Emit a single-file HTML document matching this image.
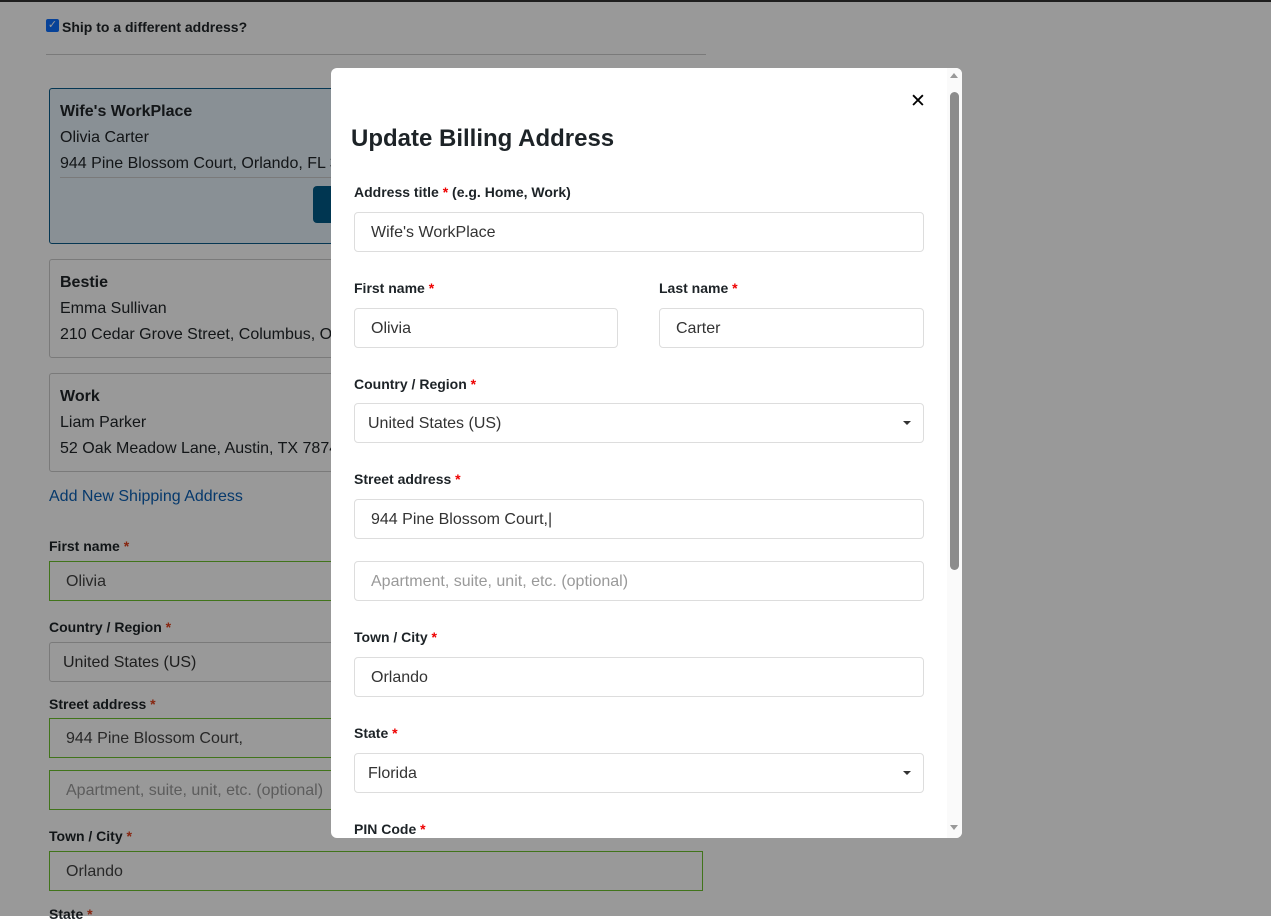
<!DOCTYPE html>
<html><head><meta charset="utf-8"><style>
*{box-sizing:border-box;margin:0;padding:0}
body{width:1271px;height:916px;overflow:hidden;background:#fff;font-family:"Liberation Sans",sans-serif;color:#212529;position:relative}
.a{position:absolute}
.lbl{font-size:14px;font-weight:bold;color:#1d2327}
.lbl b{color:#e2401c}
.inp{position:absolute;height:40px;border:1px solid #ccc;border-radius:0;font-size:16px;line-height:40px;padding-left:16px;color:#444;background:#fff}
.g{border-color:#6dc22e}
.card{position:absolute;left:49px;width:654px;border:1px solid #ccc;border-radius:3px;padding:10px 10px;font-size:16px;line-height:26px}
.ov{position:absolute;inset:0;background:rgba(0,0,0,.4)}
.m{position:absolute;left:331px;top:68px;width:631px;height:770px;background:#fff;border-radius:6px;overflow:hidden}
.ml{position:absolute;font-size:14px;font-weight:bold;color:#1d2327}
.ml b{color:#e00}
.mi{position:absolute;left:23px;width:570px;height:40px;border:1px solid #ddd;border-radius:4px;font-size:16px;line-height:40px;padding-left:16px;color:#333}
.car{position:absolute;right:12px;top:17px;border-left:4px solid transparent;border-right:4px solid transparent;border-top:4px solid #333}
</style></head><body>
<div class="a" style="left:0;top:0;width:1271px;height:2px;background:#333"></div>
<div class="a" style="left:46px;top:19px;width:13px;height:13px;background:#0d6efd;border-radius:2px;color:#fff;font-size:11px;line-height:13px;text-align:center">✓</div>
<div class="a" style="left:62px;top:19px;font-size:14px;font-weight:bold">Ship to a different address?</div>
<div class="a" style="left:46px;top:54px;width:660px;height:1px;background:#ccc"></div>
<div class="card" style="top:88px;height:156px;background:#e5f0f8;border-color:#0a5c8a">
<div style="font-weight:bold">Wife's WorkPlace</div><div>Olivia Carter</div><div style="border-bottom:1px solid #ccc">944 Pine Blossom Court, Orlando, FL 32801</div>
<div class="a" style="left:263px;top:97px;width:60px;height:37px;background:#005a87;border-radius:4px"></div></div>
<div class="card" style="top:259px;height:99px"><div style="font-weight:bold">Bestie</div><div>Emma Sullivan</div><div>210 Cedar Grove Street, Columbus, OH 43215</div></div>
<div class="card" style="top:373px;height:99px"><div style="font-weight:bold">Work</div><div>Liam Parker</div><div>52 Oak Meadow Lane, Austin, TX 78741</div></div>
<div class="a" style="left:49px;top:488px;font-size:16px;color:#0a5fb4">Add New Shipping Address</div>
<div class="a lbl" style="left:49px;top:538px">First name <b>*</b></div>
<div class="inp g" style="left:49px;top:561px;width:654px">Olivia</div>
<div class="a lbl" style="left:49px;top:619px">Country / Region <b>*</b></div>
<div class="inp" style="left:49px;top:642px;width:654px;border-radius:3px;padding-left:13px;color:#333">United States (US)</div>
<div class="a lbl" style="left:49px;top:696px">Street address <b>*</b></div>
<div class="inp g" style="left:49px;top:718px;width:654px">944 Pine Blossom Court,</div>
<div class="inp g" style="left:49px;top:770px;width:654px;color:#999">Apartment, suite, unit, etc. (optional)</div>
<div class="a lbl" style="left:49px;top:828px">Town / City <b>*</b></div>
<div class="inp g" style="left:49px;top:851px;width:654px">Orlando</div>
<div class="a lbl" style="left:49px;top:906px">State <b>*</b></div>
<div class="ov"></div>
<div class="m">
<div class="a" style="left:579px;top:22px;font-size:19px;font-weight:bold;color:#000;font-family:'DejaVu Sans',sans-serif">✕</div>
<div class="a" style="left:20px;top:57px;font-size:24px;font-weight:bold;color:#1d2327">Update Billing Address</div>
<div class="ml" style="left:23px;top:116px">Address title <b>*</b> (e.g. Home, Work)</div>
<div class="mi" style="top:144px">Wife's WorkPlace</div>
<div class="ml" style="left:23px;top:212px">First name <b>*</b></div>
<div class="ml" style="left:328px;top:212px">Last name <b>*</b></div>
<div class="mi" style="top:240px;width:264px">Olivia</div>
<div class="mi" style="top:240px;left:328px;width:265px">Carter</div>
<div class="ml" style="left:23px;top:308px">Country / Region <b>*</b></div>
<div class="mi" style="top:335px;padding-left:13px">United States (US)<div class="car"></div></div>
<div class="ml" style="left:23px;top:403px">Street address <b>*</b></div>
<div class="mi" style="top:431px">944 Pine Blossom Court,|</div>
<div class="mi" style="top:493px;color:#999">Apartment, suite, unit, etc. (optional)</div>
<div class="ml" style="left:23px;top:561px">Town / City <b>*</b></div>
<div class="mi" style="top:589px">Orlando</div>
<div class="ml" style="left:23px;top:657px">State <b>*</b></div>
<div class="mi" style="top:685px;padding-left:13px">Florida<div class="car"></div></div>
<div class="ml" style="left:23px;top:753px">PIN Code <b>*</b></div>
<div class="a" style="left:616px;top:0;width:15px;height:770px;background:#fafafa"></div>
<div class="a" style="left:619px;top:24px;width:9px;height:478px;background:#8c8c8c;border-radius:5px"></div>
<div class="a" style="left:619px;top:5px;border-left:4px solid transparent;border-right:4px solid transparent;border-bottom:5px solid #999"></div>
<div class="a" style="left:619px;top:757px;border-left:4px solid transparent;border-right:4px solid transparent;border-top:5px solid #999"></div>
</div>
</body></html>
